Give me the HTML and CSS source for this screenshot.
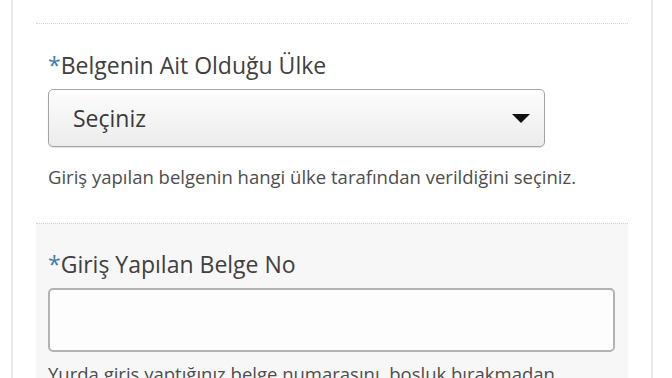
FILE: index.html
```html
<!DOCTYPE html>
<html lang="tr">
<head>
    <meta charset="UTF-8">
    <meta name="viewport" content="width=device-width, initial-scale=1.0">
    <title>Belge Bilgileri</title>
    <link rel="stylesheet" href="styles.css">
</head>
<body>
    <div class="card">
        <div class="field">
            <label class="field-label" for="country"><span class="req">*</span>Belgenin Ait Olduğu Ülke</label>
            <div class="select-box" id="country">
                <span>Seçiniz</span>
                <span class="caret"></span>
            </div>
            <p class="hint hint-select">Giriş yapılan belgenin hangi ülke tarafından verildiğini seçiniz.</p>
        </div>
        <div class="field field-alt">
            <label class="field-label" for="doc-no"><span class="req">*</span>Giriş Yapılan Belge No</label>
            <input type="text" class="text-box" id="doc-no">
            <p class="hint">Yurda giriş yaptığınız belge numarasını, boşluk bırakmadan giriniz.</p>
        </div>
    </div>
</body>
</html>
```

FILE: styles.css
```css
body {
    margin: 0;
    font-family: "Open Sans", Arial, sans-serif;
    background-color: #fff;
    color: #333;
}
.card {
    margin: 0 19px 0 11px;
    padding: 23px 23px 0 23px;
    border-left: 2px solid #e7ebef;
    border-right: 2px solid #e7ebef;
    height: 400px;
}
.field {
    border-top: 1px dotted #d4d4d4;
    padding: 26px 13px 34px 12px;
}
.field-alt {
    background-color: #f7f7f7;
    padding-top: 25px;
}
.field-label {
    display: block;
    font-size: 23px;
    line-height: 30px;
    color: #404040;
}
.req {
    color: #3f7cae;
}
.select-box {
    display: flex;
    align-items: center;
    justify-content: space-between;
    box-sizing: border-box;
    width: 497px;
    height: 58px;
    margin-top: 9px;
    padding: 0 14px 0 24px;
    border: 1px solid #a4a4a4;
    border-radius: 5px;
    background: linear-gradient(#fdfdfd, #ececed);
    box-shadow: 0 1px 1px rgba(0, 0, 0, 0.12);
    font-size: 23px;
    color: #3a3a3a;
}
.caret {
    width: 0;
    height: 0;
    border-left: 9px solid transparent;
    border-right: 9px solid transparent;
    border-top: 9px solid #111;
}
.text-box {
    display: block;
    box-sizing: border-box;
    width: 100%;
    height: 64px;
    margin: 9px 0 0;
    border: 2px solid #b3b3b3;
    border-radius: 5px;
    background-color: #fdfdfd;
    font: inherit;
}
.hint {
    margin: 10px 0 0;
    font-size: 18.5px;
    line-height: 24px;
    color: #4d4d4d;
}
.hint-select {
    margin-top: 18px;
}
```
